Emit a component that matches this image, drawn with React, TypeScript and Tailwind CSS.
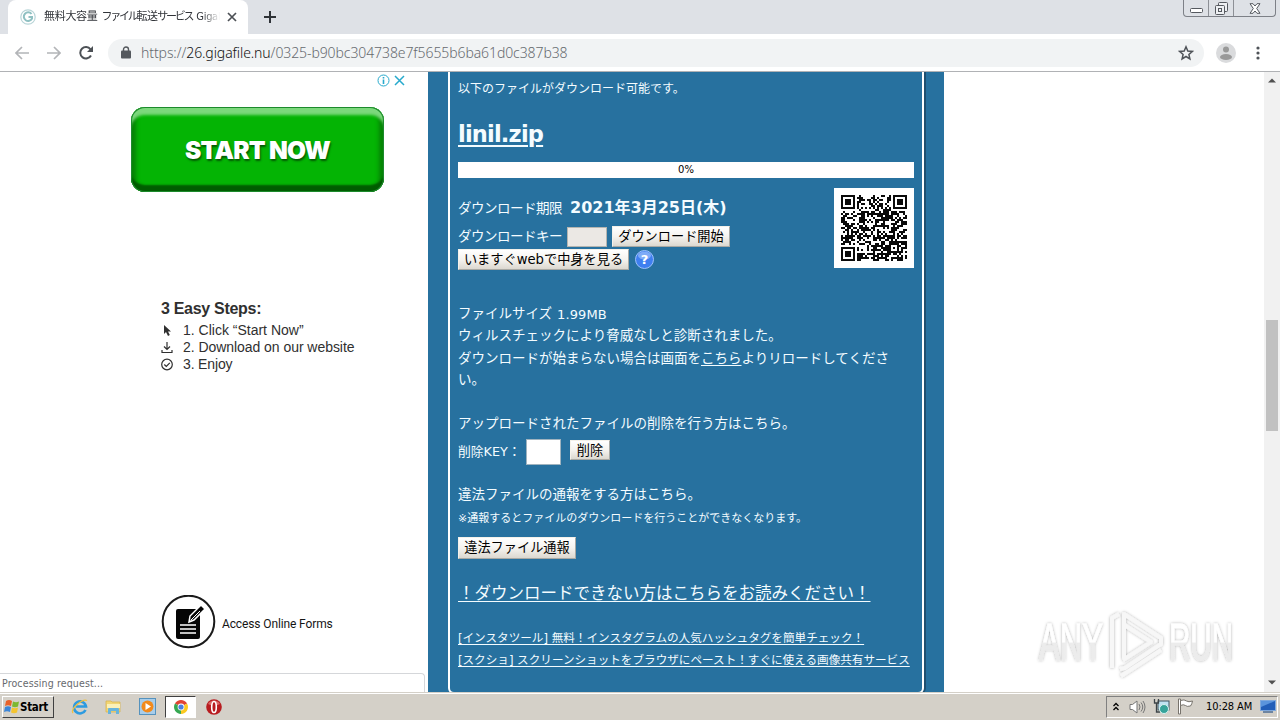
import type { ReactNode } from "react";
import clsx from "clsx";

const QR_SIZE = 33;

// finder squares in three corners, one alignment square, timing lines, data modules
function buildQr() {
  const cells: { x: number; y: number }[] = [];
  let seed = 325;
  const inSquare = (x: number, y: number, cx: number, cy: number, r: number) => {
    const d = Math.max(Math.abs(x - cx), Math.abs(y - cy));
    return d <= r ? d : -1;
  };
  for (let y = 0; y < QR_SIZE; y++) {
    for (let x = 0; x < QR_SIZE; x++) {
      seed = (seed * 48271) % 2147483647;
      let dark = seed / 2147483647 > 0.46;
      if (y === 6) dark = x % 2 === 0;
      if (x === 6) dark = y % 2 === 0;
      const align = inSquare(x, y, 26, 26, 2);
      if (align >= 0) dark = align !== 1;
      for (const [cx, cy] of [[3, 3], [29, 3], [3, 29]]) {
        const d = inSquare(x, y, cx, cy, 4);
        if (d >= 0) dark = d !== 2 && d !== 4;
      }
      if (dark) cells.push({ x, y });
    }
  }
  return cells;
}

const qrCells = buildQr();

function QrCode() {
  return (
    <div className="flex h-20 w-20 shrink-0 items-center justify-center bg-white">
      <svg width="66" height="66" viewBox="0 0 33 33" shapeRendering="crispEdges">
        {qrCells.map((c) => (
          <rect key={`${c.x}-${c.y}`} x={c.x} y={c.y} width="1" height="1" fill="#0a0a0a" />
        ))}
      </svg>
    </div>
  );
}

function FormButton({ className, children }: { className?: string; children: ReactNode }) {
  return (
    <button
      className={clsx(
        "flex shrink-0 items-center justify-center whitespace-nowrap border border-[#f4f1ea] border-r-[#a9a9a4] border-b-[#a9a9a4] bg-gradient-to-b from-white via-[#f5f3ef] to-[#dcd8d0] text-[13.2px] leading-none text-black",
        className
      )}
    >
      {children}
    </button>
  );
}

function TabStrip() {
  return (
    <div className="flex h-[34px] items-start bg-[#dee1e6]">
      <div className="ml-2 flex h-[34px] w-60 items-center rounded-t-lg bg-white pl-3">
        <svg className="shrink-0" width="16" height="16" viewBox="0 0 16 16" fill="none">
          <circle cx="8" cy="8" r="7.2" stroke="#b9d5d8" strokeWidth="1.2" />
          <path d="M11.500 5A4.300 4.300 0 1 0 12 9.500V8H8.500" stroke="#8fc0c2" strokeWidth="2" />
        </svg>
        <div className="ml-2 flex w-[176px] gap-[4px] whitespace-nowrap text-[11px] text-[#303338] [mask-image:linear-gradient(to_right,black_90%,transparent)]">
          <span className="tracking-[-0.3px]">無料大容量</span>
          <span className="tracking-[-2.25px]">ファイル<span className="tracking-[-0.6px]">転送</span>サービス</span>
          <span className="font-['DejaVu_Sans_Condensed','DejaVu_Sans'] tracking-[-0.3px]">GigaF</span>
        </div>
        <svg className="ml-[7px]" width="10" height="10" viewBox="0 0 10 10" stroke="#4c5055" strokeWidth="1.700">
          <path d="M1 1l8 8M9 1L1 9" />
        </svg>
      </div>
      <svg className="ml-4 mt-[11px]" width="12" height="12" viewBox="0 0 12 12" stroke="#2f3338" strokeWidth="2">
        <path d="M6 0v12M0 6h12" />
      </svg>
      <div className="ml-auto mr-[4px] flex h-[17px] w-[93px] rounded-b border border-t-0 border-[#7d8087]">
        <div className="flex w-[25px] items-end justify-center border-r border-[#8d9096] pb-[3px]">
          <svg width="13" height="6" viewBox="0 0 13 6">
            <rect x="0.500" y="1.500" width="12" height="4" rx="1" fill="#fff" stroke="#55595f" />
          </svg>
        </div>
        <div className="flex w-[25px] items-center justify-center border-r border-[#8d9096]">
          <svg width="13" height="13" viewBox="0 0 13 13" fill="#eef0f3" stroke="#55595f">
            <rect x="3.500" y="0.500" width="9" height="9" rx="1" />
            <rect x="0.500" y="3.500" width="9" height="9" rx="1" />
            <rect x="3.500" y="6.500" width="3" height="3" />
          </svg>
        </div>
        <div className="flex flex-1 items-center justify-center">
          <svg width="12" height="11" viewBox="0 0 12 11" fill="#fff" stroke="#55595f">
            <path d="M1 .7h3L6 3l2-2.300h3L7.700 5.500 11 10.300H8L6 8l-2 2.300H1l3.300-4.800z" />
          </svg>
        </div>
      </div>
    </div>
  );
}

function Toolbar() {
  return (
    <div className="flex h-[38px] items-center border-b border-[#b0b2b5] bg-white">
      <svg className="ml-[15px]" width="14" height="14" viewBox="0 0 14 14" fill="none" stroke="#b3b5b8" strokeWidth="1.700">
        <path d="M14 7H1.500M7 1L1 7l6 6" />
      </svg>
      <svg className="ml-[18px]" width="14" height="14" viewBox="0 0 14 14" fill="none" stroke="#b3b5b8" strokeWidth="1.700">
        <path d="M0 7h12.500M7 1l6 6-6 6" />
      </svg>
      <svg className="ml-[18px]" width="14" height="14" viewBox="0 0 14 14" fill="none">
        <path d="M12 9.500A5.700 5.700 0 1 1 11.500 3.300" stroke="#4d5156" strokeWidth="2" />
        <path d="M14 0v6H8z" fill="#4d5156" />
      </svg>
      <div className="ml-[15px] flex h-7 w-[1096px] items-center rounded-full bg-[#f1f3f4] pl-[13px] pr-[10px]">
        <svg width="10" height="13" viewBox="0 0 10 13">
          <rect y="4.500" width="10" height="8" rx="1" fill="#54585d" />
          <path d="M2.500 5V3.500a2.500 2.500 0 0 1 5 0V5" fill="none" stroke="#54585d" strokeWidth="1.400" />
        </svg>
        <div className="ml-[10px] whitespace-nowrap font-['Noto_Sans'] text-[14px] font-light tracking-[-0.09px] text-[#666a6f]">
          https://<span className="text-[#111]">26.gigafile.nu</span>/0325-b90bc304738e7f5655b6ba61d0c387b38
        </div>
        <svg className="ml-auto" width="16" height="16" viewBox="0 0 16 16" fill="none" stroke="#4f5358" strokeWidth="1.500">
          <path d="M8 1.800l1.800 4.200 4.500.4-3.400 3 1 4.500L8 11.500l-3.900 2.400 1-4.500-3.400-3 4.500-.4z" />
        </svg>
      </div>
      <svg className="ml-3" width="20" height="20" viewBox="0 0 20 20">
        <circle cx="10" cy="10" r="10" fill="#dadbdd" />
        <circle cx="10" cy="6.500" r="3" fill="#999" />
        <ellipse cx="10" cy="14" rx="6" ry="3" fill="#999" />
      </svg>
      <svg className="ml-[20px]" width="4" height="14" viewBox="0 0 4 14" fill="#4f5358">
        <circle cx="2" cy="2" r="1.600" />
        <circle cx="2" cy="7" r="1.600" />
        <circle cx="2" cy="12" r="1.600" />
      </svg>
    </div>
  );
}

function AdColumn() {
  return (
    <div className="flex w-[428px] shrink-0 flex-col">
      <div className="flex h-[17px] items-center justify-end gap-[4px] pr-[23px]">
        <svg width="13" height="13" viewBox="0 0 13 13" fill="none" stroke="#27aacd">
          <circle cx="6.500" cy="6.500" r="5.500" />
          <path d="M6.500 3v1.500M6.500 5.500V10" strokeWidth="1.600" />
        </svg>
        <svg width="11" height="11" viewBox="0 0 11 11" stroke="#27aacd" strokeWidth="1.500">
          <path d="M1 1l9 9M10 1l-9 9" />
        </svg>
      </div>
      <div className="ml-[131px] mt-[18px] flex h-[85px] w-[253px] items-center justify-center rounded-[14px] bg-[#04b404] shadow-[inset_0_0_0_1px_#1c8a2c,inset_0_9px_3px_-1px_#7cd87c,inset_0_-8px_2px_-1px_#005c00,inset_6px_0_4px_-1px_#068006,inset_-6px_0_4px_-1px_#068006]">
        <span className="mt-[2px] whitespace-nowrap font-['Inter'] text-[24.5px] font-black leading-none tracking-[-0.75px] text-white [text-shadow:1px_2px_2px_#045a04]">
          START NOW
        </span>
      </div>
      <div className="ml-[161px] mt-[106px] font-['Liberation_Sans'] text-[14px] leading-[17px] text-[#303030]">
        <div className="mb-[4px] h-5 pt-px text-[16px] font-bold leading-5 tracking-[-0.3px]">3 Easy Steps:</div>
        <div className="flex items-center">
          <svg width="12" height="13" viewBox="0 0 12 13" fill="#303030">
            <path d="M3 1v9l2-2 2 4 1.800-.9L7 7.500h3z" />
          </svg>
          <span className="ml-[10px]">1. Click “Start Now”</span>
        </div>
        <div className="flex items-center">
          <svg width="12" height="13" viewBox="0 0 12 13" fill="none" stroke="#303030" strokeWidth="1.200">
            <path d="M6 1v7M3 5.500l3 3 3-3M1 9v2.500h10V9" />
          </svg>
          <span className="ml-[10px] tracking-[-0.05px]">2. Download on our website</span>
        </div>
        <div className="flex items-center">
          <svg width="12" height="13" viewBox="0 0 12 13" fill="none" stroke="#303030" strokeWidth="1.200">
            <circle cx="6" cy="6.500" r="5.300" />
            <path d="M3.300 6.500l2 2 3.500-3.700" />
          </svg>
          <span className="ml-[10px] tracking-[-0.15px]">3. Enjoy</span>
        </div>
      </div>
      <div className="ml-[161px] mt-[222px] flex items-center">
        <svg width="55" height="54" viewBox="0 0 55 54">
          <circle cx="27.500" cy="26.500" r="25.800" fill="none" stroke="#1a1a1a" strokeWidth="2" />
          <rect x="15" y="14" width="24" height="30" rx="2" fill="#050505" />
          <path d="M28 27l1-6 11-11 4 4-11 11z" fill="#050505" stroke="#fff" strokeWidth="1.500" />
          <path d="M29.500 25.500L39 16" stroke="#fff" />
          <path d="M19 30h16M19 34h16M19 38h16" stroke="#fff" strokeWidth="1.400" />
        </svg>
        <span className="ml-[6px] mt-[3px] font-['Roboto'] text-[12px] tracking-[-0.12px] text-[#151515]">Access Online Forms</span>
      </div>
    </div>
  );
}

function DownloadPanel() {
  return (
    <div className="flex h-[620px] w-[516px] shrink-0 overflow-hidden bg-[#27719f] px-5">
      <div className="flex h-[622px] w-[476px] flex-col rounded-b-md border-x-2 border-b-2 border-white px-2 text-[13.5px] leading-none whitespace-nowrap text-[#f4fcff] shadow-[2px_0_0_#1f4f70]">
        <div className="flex h-8 items-center pt-[2px] text-[12px]">以下のファイルがダウンロード可能です。</div>
        <div className="flex h-[58px] items-center pt-[2px]">
          <a className="font-['DejaVu_Sans'] text-[22.5px] font-bold tracking-[-0.8px] underline decoration-2 underline-offset-[3px]">linil.zip</a>
        </div>
        <div className="flex h-4 shrink-0 items-center justify-center bg-white text-[10px] text-black">0%</div>
        <div className="mt-[10px] flex h-[82px] justify-between">
          <div className="flex flex-col">
            <div className="flex h-[38px] items-center pt-[2px]">
              <span className="pt-[2px] tracking-[-0.5px]">ダウンロード期限</span>
              <span className="ml-2 text-[16px] font-bold">2021年3月25日(木)</span>
            </div>
            <div className="flex h-[21px] items-center">
              <span className="w-[109px] tracking-[-0.5px]">ダウンロードキー</span>
              <div className="h-5 w-10 border border-[#b5b5b0] bg-[#ebe8e4]" />
              <FormButton className="ml-[5px] h-[21px] w-[118px]">ダウンロード開始</FormButton>
            </div>
            <div className="flex h-[23px] items-center">
              <FormButton className="mt-[2px] h-[21px] w-[171px]">いますぐwebで中身を見る</FormButton>
              <svg className="ml-[6px] mt-px" width="19" height="19" viewBox="0 0 19 19">
                <circle cx="9.500" cy="9.500" r="9" fill="#3f7ff0" stroke="#9cc0fa" />
                <ellipse cx="9.500" cy="5.500" rx="6.500" ry="4" fill="#7eabf7" />
                <text x="9.500" y="14" textAnchor="middle" fontSize="13" fontWeight="bold" fontFamily="DejaVu Sans" fill="#fff">?</text>
              </svg>
            </div>
          </div>
          <QrCode />
        </div>
        <div className="mt-8 flex h-[22px] items-center pt-[2px]">
          ファイルサイズ<span className="ml-[5px] text-[13px] tracking-[0.1px]">1.99MB</span>
        </div>
        <div className="flex h-[23px] items-center">ウィルスチェックにより脅威なしと診断されました。</div>
        <div className="flex h-[22px] items-center pt-[2px]">
          ダウンロードが始まらない場合は画面を<a className="underline underline-offset-2">こちら</a>よりリロードしてくださ
        </div>
        <div className="flex h-[21px] items-center">い。</div>
        <div className="mt-[22px] flex h-[22px] items-center pt-[2px]">アップロードされたファイルの削除を行う方はこちら。</div>
        <div className="mt-[5px] flex h-[26px]">
          <span className="w-[68px] self-center text-[12.8px]">削除KEY：</span>
          <div className="h-[26px] w-[35px] border border-[#9fb3bf] bg-white" />
          <FormButton className="ml-[9px] mt-px h-5 w-10 pt-[2px]">削除</FormButton>
        </div>
        <div className="mt-[18px] flex h-[22px] items-center pt-[2px]">違法ファイルの通報をする方はこちら。</div>
        <div className="mt-[3px] flex h-[21px] items-center text-[11px]">※通報するとファイルのダウンロードを行うことができなくなります。</div>
        <FormButton className="mt-2 h-[22px] w-[118px]">違法ファイル通報</FormButton>
        <div className="mt-[23px] flex h-[22px] items-center pt-[2px] text-[16.5px]">
          <a className="underline decoration-1 underline-offset-2">！ダウンロードできない方はこちらをお読みください！</a>
        </div>
        <div className="mt-[23px] flex h-[22px] items-center pt-[2px] text-[11.6px]">
          <a className="underline underline-offset-2">[インスタツール] 無料！インスタグラムの人気ハッシュタグを簡単チェック！</a>
        </div>
        <div className="flex h-[22px] items-center pt-[2px] text-[11.6px]">
          <a className="underline underline-offset-2">[スクショ] スクリーンショットをブラウザにペースト！すぐに使える画像共有サービス</a>
        </div>
      </div>
    </div>
  );
}

function Scrollbar() {
  return (
    <div className="ml-auto flex w-4 flex-col items-center bg-[#f1f1f1]">
      <svg className="mt-[6px]" width="8" height="5" viewBox="0 0 8 5">
        <path d="M0 4.500L4 .5l4 4z" fill="#505050" />
      </svg>
      <div className="mt-[237px] h-[111px] w-3 bg-[#c1c1c1]" />
      <svg className="mb-[7px] mt-auto" width="8" height="5" viewBox="0 0 8 5">
        <path d="M0 .5l4 4 4-4z" fill="#505050" />
      </svg>
    </div>
  );
}

function Watermark() {
  return (
    <svg className="absolute left-[1030px] top-[602px]" width="230" height="84" viewBox="0 0 230 84">
      <defs>
        <linearGradient id="wm" x1="0" y1="0" x2="0" y2="1">
          <stop offset="0.500" stopColor="#fff" />
          <stop offset="0.520" stopColor="#ececec" />
        </linearGradient>
        <filter id="wmShadow" x="-10%" y="-10%" width="120%" height="120%">
          <feDropShadow dx="0" dy="0" stdDeviation="1.800" floodColor="#000" floodOpacity="0.320" />
        </filter>
      </defs>
      <g filter="url(#wmShadow)" fill="url(#wm)" stroke="url(#wm)" strokeWidth="0.800" fontFamily="Liberation Sans" fontSize="52">
        <text x="9" y="58" textLength="64" lengthAdjust="spacingAndGlyphs">ANY</text>
        <text x="139" y="58" textLength="64" lengthAdjust="spacingAndGlyphs">RUN</text>
        <g fill="none" stroke="#f7f7f7" strokeWidth="4" strokeLinejoin="round">
          <path d="M82 66V16l7-4" />
          <path d="M94 56V12l37 24v6L95 66l-5 1" />
          <path d="M93 22l28 18-28 18" />
          <path d="M91 74l40-26" />
        </g>
      </g>
    </svg>
  );
}

function Taskbar() {
  return (
    <div className="flex h-7 items-center border-t border-[#d4d0c8] bg-[#d4d0c8] font-['DejaVu_Sans_Condensed','DejaVu_Sans'] text-black shadow-[inset_0_1px_0_#fff]">
      <div className="ml-[2px] flex h-[22px] w-[52px] items-center border border-white border-r-[#404040] border-b-[#404040] pl-[1px]">
        <svg width="16" height="16" viewBox="0 0 16 16">
          <path d="M2 2q3-2 6 0L7 7Q4 5.500 1 7z" fill="#e8622a" />
          <path d="M9 2.500q3 1.500 6 0L14 7.500q-3 1.500-6 0z" fill="#7cb832" />
          <path d="M1 8q3-1.500 6 0l-1 5q-3-1.500-6 0z" fill="#3c86d8" />
          <path d="M8 8.500q3 1.500 6 0l-1 5q-3 1.500-6 0z" fill="#f4c430" />
        </svg>
        <span className="pt-[2px] text-[11.5px] font-bold tracking-[-0.3px]">Start</span>
      </div>
      <svg className="ml-[17px]" width="18" height="18" viewBox="0 0 18 18" fill="none">
        <path d="M14.500 12A6 6 0 1 1 15 8.500H5" stroke="#2d9be0" strokeWidth="2.600" />
        <path d="M2 15C-1 11 12 0 16 2.500" stroke="#f0c040" strokeWidth="1.300" />
      </svg>
      <svg className="ml-[16px]" width="17" height="17" viewBox="0 0 17 17">
        <path d="M1 3h5l1 1h8v10H1z" fill="#f2d675" stroke="#d8b450" strokeWidth="0.800" />
        <path d="M2 6h13v4H2z" fill="#fbf0b8" />
        <path d="M3 16v-5q0-1 1-1h9q1 0 1 1v5h-3v-3H6v3z" fill="#68b4dc" />
      </svg>
      <svg className="ml-[17px]" width="17" height="17" viewBox="0 0 17 17">
        <rect x="0.500" y="0.500" width="16" height="16" fill="#a8cdea" stroke="#5592bd" />
        <circle cx="8.500" cy="8.500" r="6" fill="#f28a1c" />
        <path d="M6.500 5l5.500 3.500L6.500 12z" fill="#fff" />
      </svg>
      <div className="ml-[9px] flex h-[22px] w-[31px] items-center justify-center border border-white border-l-[#404040] border-t-[#404040] bg-white">
        <svg width="14" height="14" viewBox="0 0 14 14">
          <path d="M7 7L.940 3.500A7 7 0 0 1 13.060 3.500z" fill="#e04434" />
          <path d="M7 7L7 14A7 7 0 0 1 .940 3.500z" fill="#36a852" />
          <path d="M7 7L13.060 3.500A7 7 0 0 1 7 14z" fill="#fbc920" />
          <circle cx="7" cy="7" r="3.400" fill="#fff" />
          <circle cx="7" cy="7" r="2.600" fill="#4a7fe0" />
        </svg>
      </div>
      <svg className="ml-[10px]" width="16" height="16" viewBox="0 0 16 16">
        <circle cx="8" cy="8" r="7.800" fill="#b81c20" />
        <path d="M2 5a7 7 0 0 1 12 0q-6 3-12 0z" fill="#dc6a68" />
        <ellipse cx="8" cy="8" rx="2.300" ry="5.500" fill="#b81c20" stroke="#fff" strokeWidth="1.600" />
      </svg>
      <div className="ml-auto mr-[2px] flex h-[22px] w-[172px] items-center border border-white border-l-[#808080] border-t-[#808080] pl-[6px]">
        <svg width="6" height="9" viewBox="0 0 6 9" fill="none" stroke="#000" strokeWidth="1.300">
          <path d="M.5 4L3 1.500 5.500 4M.5 8L3 5.500 5.500 8" />
        </svg>
        <svg className="ml-[10px]" width="17" height="16" viewBox="0 0 17 16" fill="none" stroke="#777">
          <path d="M1 5.500h2.500L8 2v12L3.500 10.500H1z" fill="#fff" />
          <path d="M10 5q2 3 0 6M12 3.500q3.500 4.500 0 9M14 2q4 6 0 12" />
        </svg>
        <svg className="ml-[7px]" width="17" height="17" viewBox="0 0 17 17">
          <rect x="5" y="3" width="11" height="9" fill="#bfe3f2" stroke="#3c5560" />
          <path d="M1.500 1v4h4V1M3.500 5v9H7" fill="none" stroke="#3c4448" strokeWidth="1.300" />
          <circle cx="11" cy="11" r="4.500" fill="#36a49a" stroke="#d8f2f0" />
        </svg>
        <svg className="ml-[7px]" width="17" height="17" viewBox="0 0 17 17" fill="#fff" stroke="#77736c">
          <path d="M1.500 1v15h2V1z" />
          <path d="M3.500 2.500q4-1.500 6 .5 2 1.500 6 0-.5 3-2 5-4 1-5-.5-2-1.500-5 0z" />
        </svg>
        <span className="ml-[12px] whitespace-nowrap pt-[2px] text-[11px] tracking-[-0.1px]">10:28 AM</span>
        <svg className="ml-auto mr-[1px]" width="16" height="13" viewBox="0 0 16 13">
          <rect x="0.500" y="0.500" width="15" height="10" fill="#235eb8" stroke="#7fa8dc" />
          <path d="M1 1h14L1 7z" fill="#5b94dc" />
          <path d="M3 12h10" stroke="#4c6c94" strokeWidth="1.500" />
        </svg>
      </div>
    </div>
  );
}

export default function App() {
  return (
    <div className="relative flex h-[720px] w-[1280px] flex-col overflow-hidden bg-white font-['DejaVu_Sans','Noto_Sans_CJK_JP',sans-serif]">
      <TabStrip />
      <Toolbar />
      <div className="flex h-[620px] shrink-0">
        <AdColumn />
        <DownloadPanel />
        <Scrollbar />
      </div>
      <Taskbar />
      <div className="absolute left-0 top-[673px] flex h-[19px] w-[425px] items-center rounded-tr border-r border-t border-[#d5d7da] bg-white pl-[2px] pt-px font-['DejaVu_Sans_Condensed','DejaVu_Sans'] text-[10.5px] tracking-[0.14px] text-[#66696d]">
        Processing request...
      </div>
      <Watermark />
    </div>
  );
}
